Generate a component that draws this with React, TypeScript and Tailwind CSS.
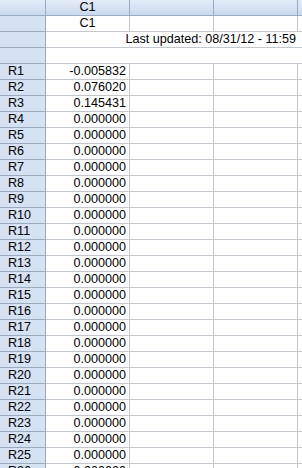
import React from "react";

const vals = ["-0.005832", "0.076020", "0.145431"];

function HeadCell({ children }: { children?: React.ReactNode }) {
  return (
    <div className="w-[46px] shrink-0 h-full border-r border-b border-[#9aaac0] bg-[#d5e2f4] pl-[8px] flex items-center">
      {children}
    </div>
  );
}

export default function App() {
  const rows = Array.from({ length: 26 }, (_, i) => i + 1);
  return (
    <div
      className="w-[302px] h-[468px] overflow-hidden bg-white text-[12.6px] leading-none text-black"
      style={{ fontFamily: '"Liberation Sans", Arial, sans-serif' }}
    >
      {/* column header row */}
      <div className="flex h-[16px] bg-gradient-to-b from-[#e4ecf8] to-[#c8d8ee]">
        <div className="w-[46px] shrink-0 border-r border-b border-[#9aaac0]" />
        <div className="w-[84px] shrink-0 border-r border-b border-[#9aaac0] flex items-center justify-center">
          C1
        </div>
        <div className="w-[84px] shrink-0 border-r border-b border-[#9aaac0]" />
        <div className="w-[84px] shrink-0 border-r border-b border-[#9aaac0]" />
        <div className="flex-1 border-b border-[#9aaac0]" />
      </div>
      {/* C1 label row */}
      <div className="flex h-[16px]">
        <HeadCell />
        <div className="w-[84px] shrink-0 border-r border-b border-[#c3c7ce] flex items-center justify-center">
          C1
        </div>
        <div className="w-[84px] shrink-0 border-r border-b border-[#c3c7ce]" />
        <div className="w-[84px] shrink-0 border-r border-b border-[#c3c7ce]" />
        <div className="flex-1 border-b border-[#c3c7ce]" />
      </div>
      {/* Last updated row */}
      <div className="flex h-[16px]">
        <HeadCell />
        <div className="w-[252px] shrink-0 border-b border-[#c3c7ce] flex items-center justify-end pr-[2px] whitespace-nowrap">
          Last updated: 08/31/12 - 11:59
        </div>
        <div className="flex-1 border-b border-[#c3c7ce]" />
      </div>
      {/* empty row */}
      <div className="flex h-[16px]">
        <HeadCell />
        <div className="flex-1 border-b border-[#c3c7ce]" />
      </div>
      {rows.map((r) => (
        <div key={r} className="flex h-[16px]">
          <HeadCell>R{r}</HeadCell>
          <div className="w-[84px] shrink-0 border-r border-b border-[#c3c7ce] flex items-center justify-end pr-[3px]">
            {vals[r - 1] ?? "0.000000"}
          </div>
          <div className="w-[84px] shrink-0 border-r border-b border-[#c3c7ce]" />
          <div className="w-[84px] shrink-0 border-r border-b border-[#c3c7ce]" />
          <div className="flex-1 border-b border-[#c3c7ce]" />
        </div>
      ))}
    </div>
  );
}
